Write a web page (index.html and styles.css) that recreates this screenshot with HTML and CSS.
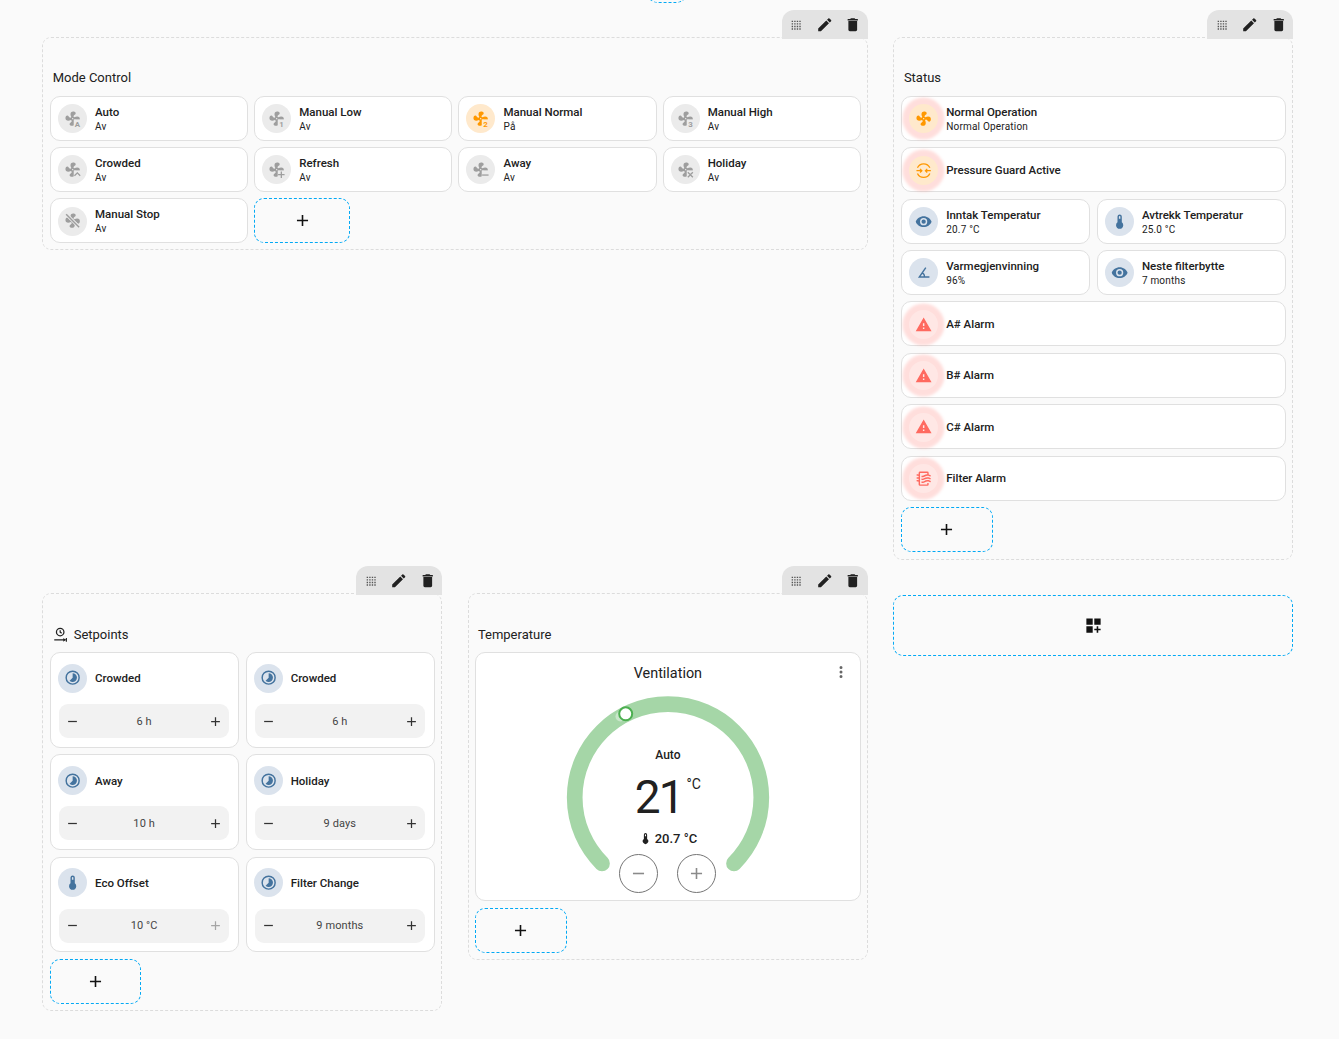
FILE: index.html
```html
<!DOCTYPE html>
<html lang="no">
<head>
<meta charset="utf-8">
<title>Dashboard</title>
<link rel="stylesheet" href="styles.css">
</head>
<body>
<svg class="defs" width="0" height="0" aria-hidden="true">
  <symbol id="fan" viewBox="0 0 24 24"><path d="M12,11A1,1 0 0,0 11,12A1,1 0 0,0 12,13A1,1 0 0,0 13,12A1,1 0 0,0 12,11M12.5,2C17,2 17.11,5.57 14.75,6.75C13.76,7.24 13.32,8.29 13.13,9.22C13.61,9.42 14.03,9.73 14.35,10.13C18.05,8.13 22.03,8.92 22.03,12.5C22.03,17 18.46,17.1 17.28,14.73C16.78,13.74 15.72,13.3 14.79,13.11C14.59,13.59 14.28,14 13.88,14.34C15.87,18.03 15.08,22 11.5,22C7,22 6.91,18.42 9.27,17.24C10.25,16.75 10.69,15.71 10.89,14.79C10.4,14.59 9.97,14.27 9.65,13.87C5.96,15.85 2,15.07 2,11.5C2,7 5.56,6.89 6.74,9.26C7.24,10.25 8.29,10.68 9.22,10.87C9.41,10.39 9.73,9.97 10.14,9.65C8.15,5.96 8.94,2 12.5,2Z"/></symbol>
  <symbol id="alert" viewBox="0 0 24 24"><path d="M13 14H11V10H13M13 18H11V16H13M1 21H23L12 2L1 21Z"/></symbol>
  <symbol id="eye" viewBox="0 0 24 24"><path d="M12,9A3,3 0 0,0 9,12A3,3 0 0,0 12,15A3,3 0 0,0 15,12A3,3 0 0,0 12,9M12,17A5,5 0 0,1 7,12A5,5 0 0,1 12,7A5,5 0 0,1 17,12A5,5 0 0,1 12,17M12,4.5C7,4.5 2.73,7.61 1,12C2.73,16.39 7,19.5 12,19.5C17,19.5 21.27,16.39 23,12C21.27,7.61 17,4.5 12,4.5Z"/></symbol>
  <symbol id="thermo" viewBox="0 0 24 24"><path d="M15 13V5A3 3 0 0 0 9 5V13A5 5 0 1 0 15 13M12 4A1 1 0 0 1 13 5V8H11V5A1 1 0 0 1 12 4Z"/></symbol>
  <symbol id="pencil" viewBox="0 0 24 24"><path d="M20.71,7.04C21.1,6.65 21.1,6 20.71,5.63L18.37,3.29C18,2.9 17.35,2.9 16.96,3.29L15.12,5.12L18.87,8.87M3,17.25V21H6.75L17.81,9.93L14.06,6.18L3,17.25Z"/></symbol>
  <symbol id="trash" viewBox="0 0 24 24"><path d="M19,4H15.5L14.5,3H9.5L8.5,4H5V6H19M6,19A2,2 0 0,0 8,21H16A2,2 0 0,0 18,19V7H6V19Z"/></symbol>
  <symbol id="drag" viewBox="0 0 24 24"><path d="M6.400,6.400h1.900v1.900h-1.900zM9.900,6.400h1.900v1.900h-1.900zM13.400,6.400h1.900v1.900h-1.900zM16.900,6.400h1.900v1.900h-1.900zM6.400,9.900h1.900v1.900h-1.900zM9.900,9.900h1.900v1.900h-1.900zM13.400,9.900h1.900v1.900h-1.900zM16.900,9.900h1.900v1.900h-1.900zM6.400,13.400h1.900v1.900h-1.900zM9.900,13.400h1.900v1.900h-1.900zM13.400,13.400h1.900v1.900h-1.900zM16.900,13.400h1.900v1.900h-1.900zM6.400,16.900h1.900v1.900h-1.900zM9.900,16.900h1.900v1.900h-1.900zM13.400,16.900h1.900v1.900h-1.900zM16.900,16.900h1.900v1.900h-1.900z"/></symbol>
  <symbol id="plus" viewBox="0 0 24 24"><path d="M19,13H13V19H11V13H5V11H11V5H13V11H19V13Z"/></symbol>
  <symbol id="minus" viewBox="0 0 24 24"><path d="M19,13H5V11H19V13Z"/></symbol>
  <symbol id="dots" viewBox="0 0 24 24"><path d="M12,16A2,2 0 0,1 14,18A2,2 0 0,1 12,20A2,2 0 0,1 10,18A2,2 0 0,1 12,16M12,10A2,2 0 0,1 14,12A2,2 0 0,1 12,14A2,2 0 0,1 10,12A2,2 0 0,1 12,10M12,4A2,2 0 0,1 14,6A2,2 0 0,1 12,8A2,2 0 0,1 10,6A2,2 0 0,1 12,4Z"/></symbol>
  <symbol id="gridplus" viewBox="0 0 24 24"><path d="M3,11H11V3H3M13,3V11H21V3M3,21H11V13H3M18,13H16V16H13V18H16V21H18V18H21V16H18V13Z"/></symbol>
  <symbol id="lapse" viewBox="0 0 24 24"><path d="M16.24,7.76C15.07,6.58 13.53,6 12,6V12L7.76,16.24C10.1,18.58 13.9,18.58 16.25,16.24C18.59,13.9 18.59,10.1 16.24,7.76M12,2A10,10 0 0,0 2,12A10,10 0 0,0 12,22A10,10 0 0,0 22,12A10,10 0 0,0 12,2M12,20A8,8 0 0,1 4,12A8,8 0 0,1 12,4A8,8 0 0,1 20,12A8,8 0 0,1 12,20Z"/></symbol>
  <symbol id="angle" viewBox="0 0 24 24"><path d="M20,19H4.09L14.18,4.43L15.82,5.57L11.28,12.13C12.89,12.96 14,14.62 14,16.54C14,16.7 14,16.85 13.97,17H20V19M7.91,17H11.96C11.98,16.85 12,16.7 12,16.54C12,15.28 11.24,14.22 10.14,13.78L7.91,17Z"/></symbol>
  <symbol id="filter" viewBox="0 0 24 24"><path d="M19,18.31V20A2,2 0 0,1 17,22H7A2,2 0 0,1 5,20V16.3C4.54,16.12 3.95,16 3,16A1,1 0 0,1 2,15A1,1 0 0,1 3,14C3.82,14 4.47,14.08 5,14.21V12.3C4.54,12.12 3.95,12 3,12A1,1 0 0,1 2,11A1,1 0 0,1 3,10C3.82,10 4.47,10.08 5,10.21V8.3C4.54,8.12 3.95,8 3,8A1,1 0 0,1 2,7A1,1 0 0,1 3,6C3.82,6 4.47,6.08 5,6.21V4A2,2 0 0,1 7,2H17A2,2 0 0,1 19,4V6.16C20.78,6.47 21.54,7.13 21.71,7.29C22.1,7.68 22.1,8.32 21.71,8.71C21.32,9.1 20.8,9.09 20.29,8.71C20.29,8.71 19.25,8 17,8C15.74,8 14.91,8.41 13.95,8.9C12.91,9.41 11.74,10 10,10C9.64,10 9.31,10 9,9.96V7.95C9.3,8 9.63,8 10,8C11.26,8 12.09,7.59 13.05,7.11C14.09,6.59 15.27,6 17,6V4H7V20H17V18C18.5,18 18.97,18.29 19,18.31M17,10C15.27,10 14.09,10.59 13.05,11.11C12.09,11.59 11.26,12 10,12C9.63,12 9.3,12 9,11.95V13.96C9.31,14 9.64,14 10,14C11.74,14 12.91,13.41 13.95,12.9C14.91,12.41 15.74,12 17,12C19.25,12 20.29,12.71 20.29,12.71C20.8,13.09 21.32,13.1 21.71,12.71C22.1,12.32 22.1,11.68 21.71,11.29C21.5,11.08 20.25,10 17,10M17,14C15.27,14 14.09,14.59 13.05,15.11C12.09,15.59 11.26,16 10,16C9.63,16 9.3,16 9,15.95V17.96C9.31,18 9.64,18 10,18C11.74,18 12.91,17.41 13.95,16.9C14.91,16.41 15.74,16 17,16C19.25,16 20.29,16.71 20.29,16.71C20.8,17.09 21.32,17.1 21.71,16.71C22.1,16.32 22.1,15.68 21.71,15.29C21.5,15.08 20.25,14 17,14Z"/></symbol>
</svg>

<div class="stray-add"></div>

<main class="page">

  <section class="panel panel-wide">
    <div class="toolbar">
      <svg class="tool tool-drag"><use href="#drag"/></svg>
      <svg class="tool"><use href="#pencil"/></svg>
      <svg class="tool"><use href="#trash"/></svg>
    </div>
    <h2 class="title">Mode Control</h2>
    <div class="grid grid-8">
      <div class="tile span-2"><span class="ico grey"><svg viewBox="0 0 24 24"><use href="#fan"/><rect class="cut" x="13.5" y="13" width="11" height="11"/><text class="badge" x="18.7" y="23">A</text></svg></span><div class="txt"><b>Auto</b><small>Av</small></div></div>
      <div class="tile span-2"><span class="ico grey"><svg viewBox="0 0 24 24"><use href="#fan"/><rect class="cut" x="13.5" y="13" width="11" height="11"/><text class="badge" x="18.7" y="23">1</text></svg></span><div class="txt"><b>Manual Low</b><small>Av</small></div></div>
      <div class="tile span-2"><span class="ico orange"><svg viewBox="0 0 24 24"><use href="#fan"/><rect class="cut" x="13.5" y="13" width="11" height="11"/><text class="badge" x="18.7" y="23">2</text></svg></span><div class="txt"><b>Manual Normal</b><small>På</small></div></div>
      <div class="tile span-2"><span class="ico grey"><svg viewBox="0 0 24 24"><use href="#fan"/><rect class="cut" x="13.5" y="13" width="11" height="11"/><text class="badge" x="18.7" y="23">3</text></svg></span><div class="txt"><b>Manual High</b><small>Av</small></div></div>

      <div class="tile span-2"><span class="ico grey"><svg viewBox="0 0 24 24"><use href="#fan"/><rect class="cut" x="13.5" y="13" width="11" height="11"/><path class="mark" d="M14.500 20.500l4-4 4 4"/></svg></span><div class="txt"><b>Crowded</b><small>Av</small></div></div>
      <div class="tile span-2"><span class="ico grey"><svg viewBox="0 0 24 24"><use href="#fan"/><rect class="cut" x="13.5" y="13" width="11" height="11"/><path class="mark" d="M14 19h9M18.500 14.500v9"/></svg></span><div class="txt"><b>Refresh</b><small>Av</small></div></div>
      <div class="tile span-2"><span class="ico grey"><svg viewBox="0 0 24 24"><use href="#fan"/><rect class="cut" x="13.5" y="13" width="11" height="11"/><path class="mark" d="M14 19.500h9"/></svg></span><div class="txt"><b>Away</b><small>Av</small></div></div>
      <div class="tile span-2"><span class="ico grey"><svg viewBox="0 0 24 24"><use href="#fan"/><rect class="cut" x="13.5" y="13" width="11" height="11"/><path class="mark" d="M15 15.500l7 7M22 15.500l-7 7"/></svg></span><div class="txt"><b>Holiday</b><small>Av</small></div></div>

      <div class="tile span-2"><span class="ico grey"><svg viewBox="0 0 24 24"><use href="#fan"/><path class="slash-bg" d="M3 3L21 21"/><path class="slash" d="M3 3L21 21"/></svg></span><div class="txt"><b>Manual Stop</b><small>Av</small></div></div>
      <div class="add span-1"><svg><use href="#plus"/></svg></div>
    </div>
  </section>

  <section class="panel panel-status">
    <div class="toolbar">
      <svg class="tool tool-drag"><use href="#drag"/></svg>
      <svg class="tool"><use href="#pencil"/></svg>
      <svg class="tool"><use href="#trash"/></svg>
    </div>
    <h2 class="title">Status</h2>
    <div class="grid grid-4">
      <div class="tile span-4"><span class="ico orange pulse"><svg viewBox="0 0 24 24"><use href="#fan"/></svg></span><div class="txt"><b>Normal Operation</b><small>Normal Operation</small></div></div>
      <div class="tile span-4"><span class="ico orange pulse"><svg viewBox="0 0 24 24"><path class="guard" d="M3.400 8A9.500 9.500 0 0 1 20.600 8M3.400 16A9.500 9.500 0 0 0 20.600 16M2 12H9.500M7 9.500L9.500 12L7 14.500M22 12H14.500M17 9.500L14.500 12L17 14.500"/></svg></span><div class="txt"><b>Pressure Guard Active</b></div></div>
      <div class="tile span-2"><span class="ico blue"><svg viewBox="0 0 24 24"><use href="#eye"/></svg></span><div class="txt"><b>Inntak Temperatur</b><small>20.7 °C</small></div></div>
      <div class="tile span-2"><span class="ico blue"><svg viewBox="0 0 24 24"><use href="#thermo"/></svg></span><div class="txt"><b>Avtrekk Temperatur</b><small>25.0 °C</small></div></div>
      <div class="tile span-2"><span class="ico blue"><svg viewBox="0 0 24 24"><use href="#angle"/></svg></span><div class="txt"><b>Varmegjenvinning</b><small>96%</small></div></div>
      <div class="tile span-2"><span class="ico blue"><svg viewBox="0 0 24 24"><use href="#eye"/></svg></span><div class="txt"><b>Neste filterbytte</b><small>7 months</small></div></div>
      <div class="tile span-4"><span class="ico red pulse"><svg viewBox="0 0 24 24"><use href="#alert"/></svg></span><div class="txt"><b>A# Alarm</b></div></div>
      <div class="tile span-4"><span class="ico red pulse"><svg viewBox="0 0 24 24"><use href="#alert"/></svg></span><div class="txt"><b>B# Alarm</b></div></div>
      <div class="tile span-4"><span class="ico red pulse"><svg viewBox="0 0 24 24"><use href="#alert"/></svg></span><div class="txt"><b>C# Alarm</b></div></div>
      <div class="tile span-4"><span class="ico red pulse"><svg viewBox="0 0 24 24"><use href="#filter"/></svg></span><div class="txt"><b>Filter Alarm</b></div></div>
      <div class="add span-1"><svg><use href="#plus"/></svg></div>
    </div>
  </section>

  <section class="panel">
    <div class="toolbar">
      <svg class="tool tool-drag"><use href="#drag"/></svg>
      <svg class="tool"><use href="#pencil"/></svg>
      <svg class="tool"><use href="#trash"/></svg>
    </div>
    <h2 class="title">
      <svg class="title-ico" viewBox="0 0 24 24"><circle class="ln" cx="11.5" cy="8" r="6"/><path class="ln" d="M11.5 5v3.4l2.4 1.4M2 20.5h18"/><path d="M16.5 17.5l4 3-4 3zM20.5 17.5h1.8v6h-1.8z"/></svg>
      Setpoints
    </h2>
    <div class="grid grid-4">
      <div class="setp span-2"><div class="setp-head"><span class="ico blue"><svg viewBox="0 0 24 24"><use href="#lapse"/></svg></span><b>Crowded</b></div><div class="stepper"><svg><use href="#minus"/></svg><span>6 h</span><svg><use href="#plus"/></svg></div></div>
      <div class="setp span-2"><div class="setp-head"><span class="ico blue"><svg viewBox="0 0 24 24"><use href="#lapse"/></svg></span><b>Crowded</b></div><div class="stepper"><svg><use href="#minus"/></svg><span>6 h</span><svg><use href="#plus"/></svg></div></div>
      <div class="setp span-2"><div class="setp-head"><span class="ico blue"><svg viewBox="0 0 24 24"><use href="#lapse"/></svg></span><b>Away</b></div><div class="stepper"><svg><use href="#minus"/></svg><span>10 h</span><svg><use href="#plus"/></svg></div></div>
      <div class="setp span-2"><div class="setp-head"><span class="ico blue"><svg viewBox="0 0 24 24"><use href="#lapse"/></svg></span><b>Holiday</b></div><div class="stepper"><svg><use href="#minus"/></svg><span>9 days</span><svg><use href="#plus"/></svg></div></div>
      <div class="setp span-2"><div class="setp-head"><span class="ico blue"><svg viewBox="0 0 24 24"><use href="#thermo"/></svg></span><b>Eco Offset</b></div><div class="stepper"><svg><use href="#minus"/></svg><span>10 °C</span><svg class="off"><use href="#plus"/></svg></div></div>
      <div class="setp span-2"><div class="setp-head"><span class="ico blue"><svg viewBox="0 0 24 24"><use href="#lapse"/></svg></span><b>Filter Change</b></div><div class="stepper"><svg><use href="#minus"/></svg><span>9 months</span><svg><use href="#plus"/></svg></div></div>
      <div class="add span-1"><svg><use href="#plus"/></svg></div>
    </div>
  </section>

  <section class="panel panel-temp">
    <div class="toolbar">
      <svg class="tool tool-drag"><use href="#drag"/></svg>
      <svg class="tool"><use href="#pencil"/></svg>
      <svg class="tool"><use href="#trash"/></svg>
    </div>
    <h2 class="title">Temperature</h2>
    <div class="grid grid-4">
      <div class="thermostat span-4">
        <div class="th-title">Ventilation</div>
        <svg class="th-menu"><use href="#dots"/></svg>
        <div class="dial">
          <svg class="dial-arc" viewBox="0 0 220 208">
            <path class="arc" d="M44 177.400A93.300 93.300 0 1 1 176 177.400"/>
            <circle class="ghost" cx="62.500" cy="30.500" r="5"/>
            <circle class="handle" cx="67.700" cy="27.800" r="6.500"/>
          </svg>
          <div class="dial-mode">Auto</div>
          <div class="dial-temp"><span class="num">21</span><span class="unit">°C</span></div>
          <div class="dial-cur"><svg><use href="#thermo"/></svg>20.7 °C</div>
          <div class="dial-btns">
            <span class="round"><svg><use href="#minus"/></svg></span>
            <span class="round"><svg><use href="#plus"/></svg></span>
          </div>
        </div>
      </div>
      <div class="add span-1"><svg><use href="#plus"/></svg></div>
    </div>
  </section>

  <div class="add add-section"><svg><use href="#gridplus"/></svg></div>
</main>
</body>
</html>
```

FILE: styles.css
```css
* { box-sizing: border-box; }
html, body { margin: 0; height: 100%; }
body {
  background: #fafafa;
  color: #212121;
  font-family: Roboto, "Noto Sans", sans-serif;
  position: relative;
  overflow: hidden;
}
.defs { position: absolute; }
.stray-add {
  position: absolute;
  left: 646px;
  top: -50px;
  width: 42px;
  height: 53px;
  border: 1px dashed #03a9f4;
  border-radius: 12px;
}
.page {
  display: grid;
  grid-template-columns: repeat(3, 400px);
  column-gap: 25.6px;
  row-gap: 33.900px;
  align-items: start;
  padding: 37.2px 0 0 42px;
}
.panel {
  position: relative;
  border: 1px dashed #dcdcdc;
  border-radius: 9px;
  padding: 31.1px 6px 5.800px 7px;
}
.panel-wide { grid-column: span 2; padding-right: 5.700px; padding-bottom: 6px; }
.panel-status { padding-bottom: 6.600px; }
.panel-temp { padding-left: 6.600px; }
.toolbar {
  position: absolute;
  top: -28px;
  right: -1px;
  width: 86px;
  height: 29px;
  background: #e3e3e3;
  border-radius: 12px 12px 0 0;
  display: flex;
  align-items: center;
  padding: 0 5.5px;
  gap: 11px;
}
.tool { width: 17.500px; height: 17.500px; fill: #212121; flex: none; }
.tool-drag { fill: #555; }
.title {
  margin: 0 0 9.600px 2.700px;
  height: 17px;
  font-size: 13px;
  font-weight: 400;
  line-height: 17px;
  display: flex;
  align-items: center;
  gap: 6px;
}
.title-ico { width: 15px; height: 15px; flex: none; fill: #212121; }
.ln { fill: none; stroke: #212121; stroke-width: 2; }
.grid { display: grid; gap: 6.4px; }
.grid-8 { grid-template-columns: repeat(8, 1fr); gap: 6.200px 6px; }
.grid-4 { grid-template-columns: repeat(4, 1fr); }
.span-1 { grid-column: span 1; }
.span-2 { grid-column: span 2; }
.span-4 { grid-column: span 4; }
.tile {
  height: 45px;
  background: #fff;
  border: 1px solid #e0e0e0;
  border-radius: 10px;
  display: flex;
  align-items: center;
  padding: 0.800px 0 0 7px;
  gap: 8px;
  min-width: 0;
}
.ico {
  width: 29px;
  height: 29px;
  border-radius: 50%;
  display: flex;
  align-items: center;
  justify-content: center;
  flex: none;
}
.ico svg { width: 17.300px; height: 17.300px; display: block; }
.grey { background: #ebebeb; fill: #9e9e9e; }
.grey .cut { fill: #ebebeb; }
.grey .mark { stroke: #9e9e9e; }
.grey .badge { fill: #9e9e9e; }
.orange { background: #ffe9cc; fill: #ff9800; }
.orange .cut { fill: #ffe9cc; }
.orange .badge { fill: #ff9800; }
.blue { background: #dbe3ed; fill: #44739e; }
.red { background: #ffe7e5; fill: #ff6a60; }
.cut { stroke: none; }
.badge { font: 700 11px Roboto, sans-serif; text-anchor: middle; }
.mark { fill: none; stroke-width: 1.800; }
.slash-bg { fill: none; stroke: #ebebeb; stroke-width: 4.500; }
.slash { fill: none; stroke: #9e9e9e; stroke-width: 2; }
.guard { fill: none; stroke: #ff9800; stroke-width: 1.800; }
.pulse { box-shadow: 0 0 3px 6.500px rgba(255, 90, 80, 0.2); }
.txt { display: flex; flex-direction: column; min-width: 0; }
.txt b, .setp-head b {
  font-size: 11.500px;
  line-height: 15px;
  font-weight: 500;
  white-space: nowrap;
}
.setp-head b { padding-top: 1.800px; }
.txt small {
  font-size: 10px;
  line-height: 13px;
  letter-spacing: 0.2px;
  white-space: nowrap;
}
.add {
  height: 45px;
  border: 1px dashed #03a9f4;
  border-radius: 10px;
  display: flex;
  align-items: center;
  justify-content: center;
}
.add svg { width: 19px; height: 19px; fill: #111; }
.add-section { height: 61px; margin-top: 1.400px; }
.setp {
  height: 95.800px;
  background: #fff;
  border: 1px solid #e0e0e0;
  border-radius: 10px;
  padding: 10.400px 9px 0 7px;
  display: flex;
  flex-direction: column;
}
.setp-head { height: 29px; display: flex; align-items: center; gap: 8px; }
.stepper {
  margin: 11.600px 0 0 1px;
  height: 34px;
  background: #f2f2f2;
  border-radius: 9px;
  display: flex;
  align-items: center;
  padding: 0.600px 6px 0;
  font-size: 11px;
  color: #444;
}
.stepper span { flex: 1; text-align: center; letter-spacing: 0.1px; }
.stepper svg { width: 15px; height: 15px; fill: #333; flex: none; }
.stepper svg.off { fill: #a5a5a5; }
.thermostat {
  position: relative;
  height: 249.200px;
  background: #fff;
  border: 1px solid #e0e0e0;
  border-radius: 10px;
}
.th-title {
  height: 32.600px;
  padding-top: 11.600px;
  line-height: 18px;
  font-size: 14.400px;
  text-align: center;
}
.th-menu { position: absolute; top: 9.600px; right: 10px; width: 18px; height: 18px; fill: #666; }
.dial {
  position: relative;
  width: 220px;
  height: 208px;
  margin: 0 auto;
  display: flex;
  flex-direction: column;
  align-items: center;
  padding-top: 62.500px;
}
.dial-arc { position: absolute; left: 0; top: 0; width: 220px; height: 208px; }
.arc { fill: none; stroke: #a5d6a7; stroke-width: 15.700; stroke-linecap: round; }
.ghost { fill: #c9e6ca; }
.handle { fill: #fff; stroke: #4caf50; stroke-width: 2; }
.dial-mode, .dial-temp, .dial-cur, .dial-btns { position: relative; }
.dial-mode { font-size: 12px; font-weight: 500; line-height: 14px; }
.dial-temp { display: flex; margin-top: 7px; height: 56px; }
.num { font-size: 46px; line-height: 56px; letter-spacing: -2px; }
.unit { font-size: 14px; line-height: 16px; margin: 6.500px 0 0 4px; }
.dial-cur {
  display: flex;
  align-items: center;
  margin-top: 5px;
  height: 16px;
  font-size: 13px;
  font-weight: 500;
  gap: 3px;
}
.dial-cur svg { width: 13px; height: 13px; fill: #212121; }
.dial-btns { display: flex; gap: 19px; margin-top: 8px; }
.round {
  width: 39px;
  height: 39px;
  border: 1px solid #757575;
  border-radius: 50%;
  background: #fff;
  display: flex;
  align-items: center;
  justify-content: center;
}
.round svg { width: 19px; height: 19px; fill: #8a8a8a; }
```
